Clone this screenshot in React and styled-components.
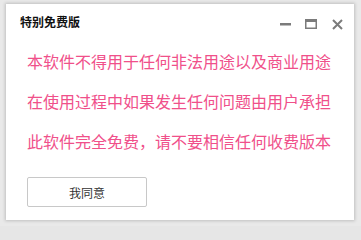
import React from "react";
import styled, { createGlobalStyle } from "styled-components";

const Global = createGlobalStyle`
  html, body { margin: 0; padding: 0; background: #e6e6e6; }
  body { font-family: "Noto Sans CJK SC", "Microsoft YaHei", sans-serif; }
`;

const Stage = styled.div`
  width: 361px;
  height: 226px;
  box-sizing: border-box;
  padding: 4px 7px 6px 6px;
  background: #e9e9e9;
`;

const Window = styled.div`
  width: 348px;
  height: 216px;
  background: #fff;
  box-shadow: 0 0 3px 1px rgba(0, 0, 0, 0.18);
  display: flex;
  flex-direction: column;
`;

const TitleBar = styled.div`
  height: 34px;
  display: flex;
  align-items: center;
  padding: 0 11px 0 14px;
`;

const Title = styled.div`
  flex: 1;
  font-size: 12px;
  font-weight: bold;
  color: #111;
`;

const Controls = styled.div`
  display: flex;
  align-items: center;
  gap: 14px;
  padding-top: 6px;
`;

const CtrlBtn = styled.div`
  width: 12px;
  height: 12px;
  display: flex;
  align-items: center;
  justify-content: center;
`;

const Body = styled.div`
  padding: 3px 0 0 21px;
`;

const Line = styled.div`
  font-size: 16px;
  line-height: 40px;
  color: #f0508a;
  white-space: nowrap;
`;

const AgreeButton = styled.button`
  margin-top: 16px;
  width: 120px;
  height: 30px;
  background: #fff;
  border: 1px solid #c8c8c8;
  border-radius: 2px;
  font-family: inherit;
  font-size: 12px;
  color: #333;
  padding: 0;
`;

export default function App() {
  return (
    <>
      <Global />
      <Stage>
        <Window>
          <TitleBar>
            <Title>特别免费版</Title>
            <Controls>
              <CtrlBtn>
                <svg width="11" height="12" viewBox="0 0 11 12">
                  <rect x="0" y="5" width="11" height="2.5" fill="#7b7b7b" />
                </svg>
              </CtrlBtn>
              <CtrlBtn>
                <svg width="12" height="10" viewBox="0 0 12 10">
                  <rect x="0.75" y="0.75" width="10.5" height="8.5" fill="none" stroke="#7b7b7b" strokeWidth="1.5" />
                  <rect x="0" y="0" width="12" height="3" fill="#7b7b7b" />
                </svg>
              </CtrlBtn>
              <CtrlBtn>
                <svg width="11" height="11" viewBox="0 0 11 11">
                  <path d="M1 1L10 10M10 1L1 10" stroke="#7b7b7b" strokeWidth="2" />
                </svg>
              </CtrlBtn>
            </Controls>
          </TitleBar>
          <Body>
            <Line>本软件不得用于任何非法用途以及商业用途</Line>
            <Line>在使用过程中如果发生任何问题由用户承担</Line>
            <Line>此软件完全免费，请不要相信任何收费版本</Line>
            <AgreeButton>我同意</AgreeButton>
          </Body>
        </Window>
      </Stage>
    </>
  );
}
